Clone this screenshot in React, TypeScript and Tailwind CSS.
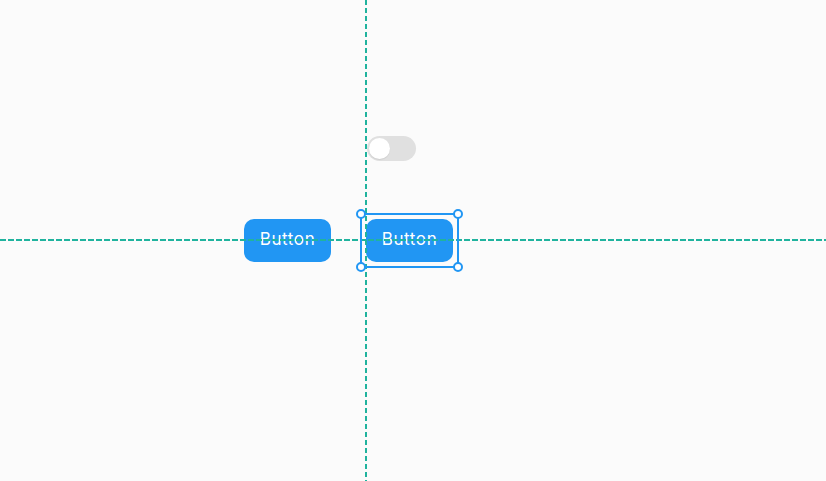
export default function App() {
  const corners = [
    "left-[356px] top-[209px]",
    "left-[453px] top-[209px]",
    "left-[356px] top-[262px]",
    "left-[453px] top-[262px]",
  ];
  const btn =
    "absolute top-[219px] w-[87px] h-[43px] rounded-[10px] bg-[#2196f3] text-white text-[17px] tracking-[0.6px] leading-none pb-[3px] flex items-center justify-center";
  return (
    <div
      className="relative w-[826px] h-[481px] overflow-hidden bg-[#fbfbfb]"
      style={{ fontFamily: "Inter, 'Noto Sans', sans-serif" }}
    >
      {/* toggle switch (off) */}
      <div className="absolute left-[367px] top-[136px] w-[49px] h-[25px] rounded-full bg-[#e0e0e0] p-[2px]">
        <div className="w-[21px] h-[21px] rounded-full bg-white shadow-[0_1px_1px_rgba(0,0,0,0.08)]" />
      </div>

      {/* buttons */}
      <button className={`${btn} left-[244px]`}>Button</button>
      <button className={`${btn} left-[366px]`}>Button</button>

      {/* alignment guides */}
      <div className="absolute left-0 top-[239px] w-full h-[2px] bg-[repeating-linear-gradient(90deg,#20b39e_0px,#20b39e_6px,transparent_6px,transparent_8px)]" />
      <div className="absolute top-0 left-[365px] h-full w-[2px] bg-[repeating-linear-gradient(180deg,#20b39e_0px,#20b39e_5px,transparent_5px,transparent_8px)]" />

      {/* selection frame */}
      <div className="absolute left-[360px] top-[213px] w-[99px] h-[55px] border-2 border-[#2196f3]" />
      {corners.map((c) => (
        <div
          key={c}
          className={`absolute ${c} w-[10px] h-[10px] rounded-full bg-white border-2 border-[#2196f3]`}
        />
      ))}
    </div>
  );
}
